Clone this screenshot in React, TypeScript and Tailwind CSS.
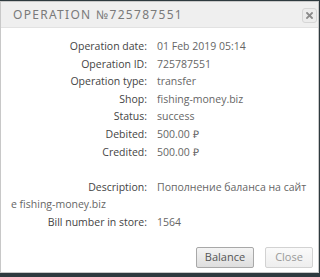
import React from "react";

const rows: [string, string][] = [
  ["Operation date:", "01 Feb 2019 05:14"],
  ["Operation ID:", "725787551"],
  ["Operation type:", "transfer"],
  ["Shop:", "fishing-money.biz"],
  ["Status:", "success"],
  ["Debited:", "500.00 ₽"],
  ["Credited:", "500.00 ₽"],
];

export default function App() {
  return (
    <div className="w-[320px] h-[277px] bg-[#2e3a3f] pt-[1px] overflow-hidden">
      <div className="w-[319px] h-[272px] bg-white border border-[#c8c8c8] flex flex-col">
        <div className="h-[26px] bg-[#efefef] border-b border-[#e2e2e2] flex items-center justify-between pl-[12px] pr-[1px]">
          <span
            className="text-[12px] tracking-[1.3px] text-[#7a7a7a] pt-[1px]"
            style={{ fontFamily: '"Noto Sans", sans-serif' }}
          >
            OPERATION №725787551
          </span>
          <div className="w-[15px] h-[15px] mt-[2px] border border-[#d6d6d6] rounded-[3px] bg-[#ececec] flex items-center justify-center">
            <svg width="7" height="7" viewBox="0 0 7 7">
              <path d="M1 1L6 6M6 1L1 6" stroke="#8a8a8a" strokeWidth="1.8" strokeLinecap="square" />
            </svg>
          </div>
        </div>
        <div
          className="pl-[10px] pt-[10px] text-[10.5px] leading-[17.6px] text-[#444]"
          style={{ fontFamily: '"Open Sans", sans-serif' }}
        >
          {rows.map(([k, v]) => (
            <div key={k}>
              <span className="inline-block w-[136px] text-right">{k}</span>
              <span className="ml-[10px] text-[#666]">{v}</span>
            </div>
          ))}
          <div>&nbsp;</div>
          <div>
            <span className="inline-block w-[136px] text-right">Description:</span>
            <span className="ml-[10px] text-[#666]">
              Пополнение баланса на сайт
              <br />
              е fishing-money.biz
            </span>
          </div>
          <div>
            <span className="inline-block w-[136px] text-right">Bill number in store:</span>
            <span className="ml-[10px] text-[#666]">1564</span>
          </div>
        </div>
        <div className="flex-1" />
        <div
          className="flex justify-end gap-[11px] pr-[5px] pb-[4px]"
          style={{ fontFamily: '"Open Sans", sans-serif' }}
        >
          <button className="w-[58px] h-[21px] border border-[#a8a8a8] rounded-[2px] bg-gradient-to-b from-[#f4f4f4] to-[#dedede] text-[11px] text-[#555]">
            Balance
          </button>
          <button className="w-[48px] h-[21px] border border-[#d2d2d2] rounded-[2px] bg-gradient-to-b from-[#fafafa] to-[#eeeeee] text-[11px] text-[#999]">
            Close
          </button>
        </div>
      </div>
    </div>
  );
}
